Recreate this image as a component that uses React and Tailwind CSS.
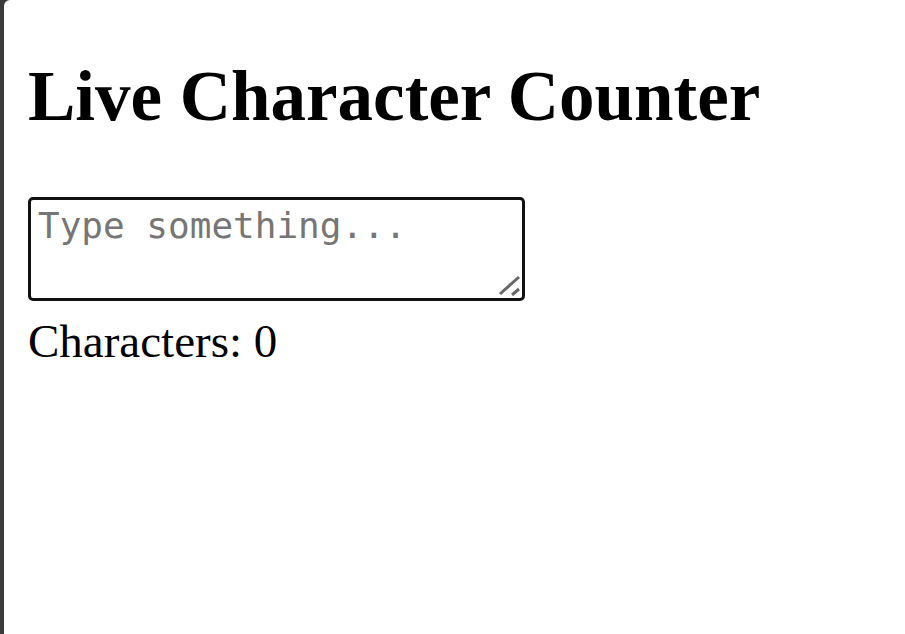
export default function App() {
  return (
    <div className="w-[905px] h-[634px] bg-[#3a3a3a] flex overflow-hidden">
      <div className="ml-[4px] flex-1 bg-white rounded-tl-[6px] pl-[24px] pt-[55px]" style={{ fontFamily: '"Liberation Serif", "Times New Roman", serif' }}>
        <h1 className="m-0 text-[71px] font-bold leading-[82px] text-black">Live Character Counter</h1>
        <div className="relative mt-[60px] w-[497px] h-[104px]">
          <textarea
            placeholder="Type something..."
            className="block w-[497px] h-[104px] resize-none border-[3px] border-[#111] rounded-[5px] px-[7px] py-[5px] text-[36px] leading-[42px] text-black placeholder:text-[#767676] outline-none"
            style={{ fontFamily: '"DejaVu Sans Mono", monospace' }}
          />
          <svg className="absolute left-[469px] top-[75px] pointer-events-none" width="24" height="24" viewBox="0 0 24 24">
            <line x1="22" y1="5" x2="3" y2="22" stroke="#666" strokeWidth="3" />
            <line x1="22" y1="17" x2="15" y2="23" stroke="#666" strokeWidth="3" />
          </svg>
        </div>
        <div className="mt-[13px] text-[47px] leading-[54px] text-black">Characters: 0</div>
      </div>
    </div>
  );
}
